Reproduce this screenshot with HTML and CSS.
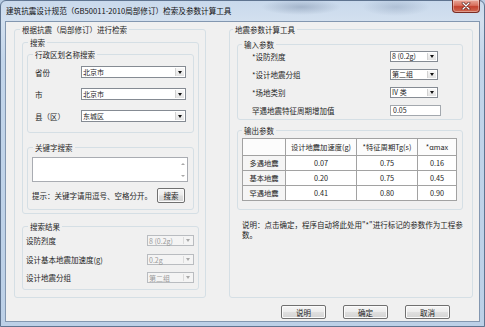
FILE: index.html
```html
<!DOCTYPE html>
<html lang="zh-CN">
<head>
<meta charset="utf-8">
<title>建筑抗震设计规范检索及参数计算工具</title>
<link rel="stylesheet" href="styles.css">
</head>
<body>
<div class="window">
  <div class="titlebar">
    <span class="title">建筑抗震设计规范（GB50011-2010局部修订）检索及参数计算工具</span>
    <span class="close"><svg width="10" height="8" viewBox="0 0 10 8"><path d="M2 1 L8 7 M8 1 L2 7" stroke="#5a1a14" stroke-width="2.6" stroke-linecap="round"/><path d="M2 1 L8 7 M8 1 L2 7" stroke="#ffffff" stroke-width="1.4" stroke-linecap="round"/></svg></span>
  </div>
  <div class="client">
    <div class="columns">
      <fieldset class="group g-left">
        <legend>根据抗震（局部修订）进行检索</legend>
        <fieldset class="group g-search">
          <legend>搜索</legend>
          <fieldset class="group g-region">
            <legend>行政区划名称搜索</legend>
            <div class="frow">
              <span class="lbl lbl-region">省份</span>
              <div class="combo c-region"><span class="cval">北京市</span><span class="arrow"><i></i></span></div>
            </div>
            <div class="frow">
              <span class="lbl lbl-region">市</span>
              <div class="combo c-region"><span class="cval">北京市</span><span class="arrow"><i></i></span></div>
            </div>
            <div class="frow">
              <span class="lbl lbl-region">县（区）</span>
              <div class="combo c-region"><span class="cval">东城区</span><span class="arrow"><i></i></span></div>
            </div>
          </fieldset>
          <fieldset class="group g-keyword">
            <legend>关键字搜索</legend>
            <div class="memo">
              <div class="memo-body"></div>
              <div class="vscroll"><i class="up"></i><i class="down"></i></div>
            </div>
            <div class="hint-row">
              <span class="hint">提示：关键字请用逗号、空格分开。</span>
              <button class="btn btn-search">搜索</button>
            </div>
          </fieldset>
        </fieldset>
        <fieldset class="group g-result">
          <legend>搜索结果</legend>
          <div class="frow frow-s">
            <span class="lbl lbl-result">设防烈度</span>
            <div class="combo c-result disabled"><span class="cval">8 (0.2g)</span><span class="arrow"><i></i></span></div>
          </div>
          <div class="frow frow-s">
            <span class="lbl lbl-result">设计基本地震加速度(g)</span>
            <div class="combo c-result disabled"><span class="cval">0.2g</span><span class="arrow"><i></i></span></div>
          </div>
          <div class="frow frow-s">
            <span class="lbl lbl-result">设计地震分组</span>
            <div class="combo c-result disabled"><span class="cval">第二组</span><span class="arrow"><i></i></span></div>
          </div>
        </fieldset>
      </fieldset>

      <fieldset class="group g-right">
        <legend>地震参数计算工具</legend>
        <fieldset class="group g-input">
          <legend>输入参数</legend>
          <div class="frow frow-s">
            <span class="lbl lbl-input">*设防烈度</span>
            <div class="combo c-input"><span class="cval">8 (0.2g)</span><span class="arrow"><i></i></span></div>
          </div>
          <div class="frow frow-s">
            <span class="lbl lbl-input">*设计地震分组</span>
            <div class="combo c-input"><span class="cval">第二组</span><span class="arrow"><i></i></span></div>
          </div>
          <div class="frow frow-s">
            <span class="lbl lbl-input">*场地类别</span>
            <div class="combo c-input"><span class="cval">IV 类</span><span class="arrow"><i></i></span></div>
          </div>
          <div class="frow frow-s">
            <span class="lbl lbl-input">罕遇地震特征周期增加值</span>
            <div class="textbox">0.05</div>
          </div>
        </fieldset>
        <fieldset class="group g-output">
          <legend>输出参数</legend>
          <table class="grid">
            <colgroup><col class="col-h"><col class="col-a"><col class="col-b"><col class="col-c"></colgroup>
            <thead>
              <tr><th></th><th>设计地震加速度(g)</th><th>*特征周期Tg(s)</th><th>*αmax</th></tr>
            </thead>
            <tbody>
              <tr><th>多遇地震</th><td>0.07</td><td>0.75</td><td>0.16</td></tr>
              <tr><th>基本地震</th><td>0.20</td><td>0.75</td><td>0.45</td></tr>
              <tr><th>罕遇地震</th><td>0.41</td><td>0.80</td><td>0.90</td></tr>
            </tbody>
          </table>
        </fieldset>
        <p class="note">说明：点击确定，程序自动将此处用"*"进行标记的参数作为工程参<br>数。</p>
      </fieldset>
    </div>
    <div class="buttons">
      <button class="btn btn-main">说明</button>
      <button class="btn btn-main">确定</button>
      <button class="btn btn-main">取消</button>
    </div>
  </div>
</div>
</body>
</html>
```

FILE: styles.css
```css
* { box-sizing: border-box; }
html, body { margin: 0; padding: 0; }
body {
  width: 485px;
  height: 327px;
  overflow: hidden;
  background: #b7cbe2;
  font-family: "Noto Sans CJK SC", "Noto Sans", sans-serif;
  font-size: 7.5px;
  color: #1e1e1e;
}

.window {
  width: 485px;
  height: 327px;
  display: flex;
  flex-direction: column;
  padding: 0 4px 4px 4px;
  border: 1px solid #5f7490;
  border-radius: 6px 6px 0 0;
  background:
    radial-gradient(ellipse 40px 8px at 300px 6px, rgba(90,110,140,0.35), transparent),
    radial-gradient(ellipse 34px 9px at 395px 6px, rgba(110,130,160,0.3), transparent),
    linear-gradient(180deg, #c9d9ec 0px, #d3e0ef 20px, #c2d5ea 60px, #bcd0e7 100%);
}

.titlebar {
  height: 20px;
  flex: none;
  display: flex;
  align-items: flex-start;
  padding-left: 1px;
}
.title {
  font-size: 7.6px;
  line-height: 19px;
  color: #111;
  white-space: nowrap;
}
.close {
  margin-left: auto;
  width: 28px;
  height: 13px;
  margin-top: -1px;
  display: flex;
  align-items: center;
  justify-content: center;
  border: 1px solid #7b2d24;
  border-top: none;
  border-radius: 0 0 4px 4px;
  background: linear-gradient(180deg, #e9a89a 0%, #d8705d 45%, #c4422f 55%, #cf6a52 100%);
  box-shadow: inset 0 0 0 1px rgba(255,255,255,0.35);
}

.client {
  flex: 1;
  display: flex;
  flex-direction: column;
  background: #f0f0f0;
  border: 1px solid #8397b0;
}

.columns {
  display: flex;
  gap: 23px;
  margin-top: 2px;
  padding-left: 8px;
}

/* group boxes */
.group {
  margin: 0;
  min-width: 0;
  border: 1px solid #d5dfe5;
  border-radius: 3px;
  padding: 0;
}
.group > legend {
  height: 11px;
  line-height: 11px;
  padding: 0 2px;
  font-size: 7.5px;
  color: #1e1e1e;
  white-space: nowrap;
}

.g-left { width: 192px; height: 274px; padding: 2px 0 0 7px; }
.g-left > legend { margin-left: -2px; }
.g-search { width: 177px; height: 177px; padding: 1px 0 0 4px; }
.g-search > legend { margin-left: 1px; }
.g-region {
  width: 167px; height: 84px; padding: 6px 0 0 7px;
  display: flex; flex-direction: column; gap: 10px;
}
.g-region > legend { margin-left: -2px; }
.g-keyword { width: 167px; height: 68px; margin-top: 9px; padding: 4px 0 0 4px; }
.g-keyword > legend { margin-left: 1px; }
.g-result {
  width: 177px; height: 69px; margin-top: 7px; padding: 3px 0 0 3px;
  display: flex; flex-direction: column; gap: 7.5px;
}
.g-result > legend { margin-left: 2px; }

.g-right { width: 244px; height: 274px; padding: 4px 0 0 7px; }
.g-right > legend { margin-left: -4px; }
.g-input {
  width: 226px; height: 81px; padding: 1px 0 0 14px;
  display: flex; flex-direction: column; gap: 7px;
}
.g-input > legend { margin-left: -10px; }
.g-output { width: 226px; height: 85px; margin-top: 5px; padding: 2px 0 0 4px; }
.g-output > legend { margin-left: 0; }

/* form rows */
.frow { display: flex; align-items: center; height: 12px; }
.frow-s { height: 11px; }
.lbl { flex: none; white-space: nowrap; line-height: 11px; }
.lbl-region { width: 46px; }
.lbl-result { width: 121px; }
.lbl-input { width: 138px; }

.combo {
  display: flex;
  align-items: stretch;
  height: 100%;
  background: #fff;
  border: 1px solid #858b93;
}
.combo .cval {
  flex: 1;
  padding-left: 1px;
  font-size: 7px;
  line-height: 9px;
  white-space: nowrap;
}
.c-region .cval, .c-result .cval { line-height: 10px; }
.arrow {
  width: 9px;
  margin: 1px;
  display: flex;
  align-items: center;
  justify-content: center;
  background: linear-gradient(180deg, #f8f8f8, #e3e3e3);
  border-left: 1px solid #d2d2d2;
}
.arrow i {
  width: 0; height: 0;
  border-left: 2.5px solid transparent;
  border-right: 2.5px solid transparent;
  border-top: 3px solid #111;
}
.c-region { width: 105px; }
.c-result { width: 47px; }
.c-input { width: 48px; }
.combo.disabled { background: #f4f4f4; border-color: #b9bcc0; color: #9a9a9a; }
.combo.disabled .arrow { background: #f4f4f4; border-left-color: #dcdcdc; }
.combo.disabled .arrow i { border-top-color: #a8a8a8; }

.textbox {
  width: 51px;
  height: 100%;
  background: #fff;
  border: 1px solid #a3a8ae;
  padding-left: 2px;
  font-size: 7px;
  line-height: 9px;
}

/* memo */
.memo {
  display: flex;
  width: 156px;
  height: 25px;
  background: #fff;
  border: 1px solid #a9acb2;
}
.memo-body { flex: 1; }
.vscroll {
  width: 8px;
  display: flex;
  flex-direction: column;
  justify-content: space-between;
  align-items: center;
  padding: 5px 0 4px;
}
.vscroll i {
  width: 0; height: 0;
  border-left: 2px solid transparent;
  border-right: 2px solid transparent;
}
.vscroll .up { border-bottom: 2.5px solid #a8a8a8; }
.vscroll .down { border-top: 2.5px solid #a8a8a8; }

.hint-row {
  display: flex;
  align-items: center;
  margin-top: 6px;
  height: 15px;
  width: 160px;
}
.hint { white-space: nowrap; }

.btn {
  font-family: "Noto Sans CJK SC", sans-serif;
  font-size: 7.5px;
  color: #1e1e1e;
  padding: 0;
  border: 1px solid #707070;
  border-radius: 2px;
  background: linear-gradient(180deg, #f6f6f6 0%, #ececec 48%, #dfdfdf 52%, #d4d4d4 100%);
  box-shadow: inset 0 0 0 1px #fbfbfb;
  line-height: 11px;
}
.btn-search { width: 28px; height: 15px; margin-left: auto; margin-right: 7px; }

/* grid */
.grid {
  border-collapse: collapse;
  table-layout: fixed;
  width: 214px;
  background: #fff;
  border: 1px solid #6b6b6b;
  font-size: 7.3px;
}
.grid th, .grid td {
  border: 1px solid #a2a2a2;
  padding: 0;
  height: 15px;
  text-align: center;
  font-weight: normal;
  white-space: nowrap;
  line-height: 10px;
}
.grid thead th { height: 17px; background: #fcfcfc; }
.grid tbody th { background: #f5f5f5; }
.col-h { width: 43px; }
.col-a { width: 71px; }
.col-b { width: 61px; }
.col-c { width: 39px; }

.note {
  margin: 10px 0 0 5px;
  width: 228px;
  line-height: 9.5px;
}

.buttons {
  display: flex;
  justify-content: flex-end;
  gap: 17px;
  margin-top: 7px;
  padding-right: 29px;
}
.btn-main { width: 45px; height: 14px; }
```
